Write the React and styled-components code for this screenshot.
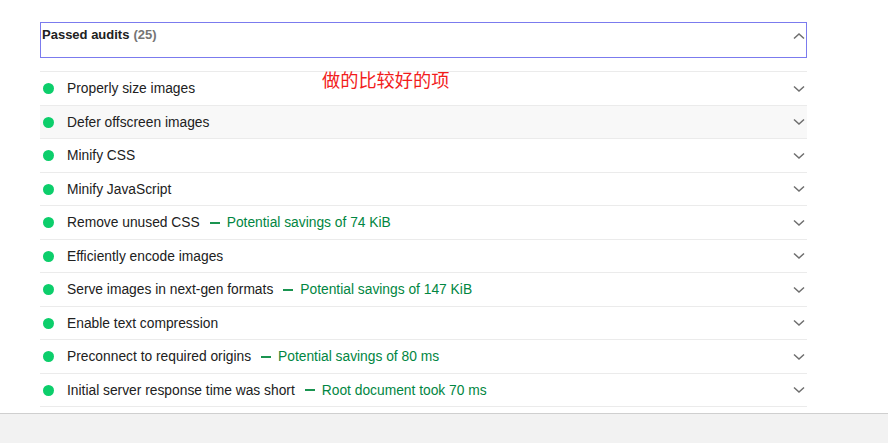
import React from "react";
import styled, { createGlobalStyle } from "styled-components";

const GlobalStyle = createGlobalStyle`
  html, body {
    margin: 0;
    padding: 0;
    background: #fff;
  }
  body {
    font-family: "Liberation Sans", Arial, sans-serif;
    color: #212121;
  }
`;

const Page = styled.div`
  display: flex;
  flex-direction: column;
  height: 443px;
  position: relative;
`;

const Main = styled.div`
  flex: 1;
  padding: 22px 0 0 40px;
`;

const Section = styled.div`
  width: 767px;
`;

const Summary = styled.div`
  height: 36px;
  box-sizing: border-box;
  border: 1px solid #7b7bee;
  padding: 4px 0 0 1px;
  display: flex;
  justify-content: space-between;
  align-items: flex-start;
  font-size: 13px;
  font-weight: bold;
  margin-bottom: 13px;
`;

const Count = styled.span`
  color: #757575;
  margin-left: 4px;
`;

const List = styled.div`
  border-bottom: 1px solid #ebebeb;
`;

const Row = styled.div`
  display: flex;
  align-items: center;
  height: 33.5px;
  box-sizing: border-box;
  padding: 1px 0 0 3px;
  border-top: 1px solid #ebebeb;
  background: ${(p) => (p.$hover ? "#f8f8f8" : "transparent")};
  font-size: 13.8px;
`;

const Dot = styled.span`
  width: 11px;
  height: 11px;
  border-radius: 50%;
  background: #0cce6b;
  flex: none;
  margin-right: 13px;
`;

const Title = styled.span`
  color: #212121;
`;

const Savings = styled.span`
  color: #018642;
  display: flex;
  align-items: center;
`;

const Dash = styled.span`
  display: inline-block;
  width: 10px;
  height: 2px;
  background: #1a9450;
  margin: 0 7px 0 10px;
`;

const Chevron = styled.svg`
  margin-left: auto;
  margin-right: 2px;
  flex: none;
`;

const SummaryChevron = styled.svg`
  margin-top: 5px;
  margin-right: 1px;
`;

const Note = styled.div`
  position: absolute;
  left: 322px;
  top: 66px;
  font-family: "Noto Sans CJK SC", sans-serif;
  font-size: 18.2px;
  color: #f21c1c;
`;

const Footer = styled.div`
  height: 29px;
  background: #f2f2f2;
  border-top: 1px solid #cfcfcf;
`;

const audits = [
  { title: "Properly size images" },
  { title: "Defer offscreen images", hover: true },
  { title: "Minify CSS" },
  { title: "Minify JavaScript" },
  { title: "Remove unused CSS", note: "Potential savings of 74 KiB" },
  { title: "Efficiently encode images" },
  { title: "Serve images in next-gen formats", note: "Potential savings of 147 KiB" },
  { title: "Enable text compression" },
  { title: "Preconnect to required origins", note: "Potential savings of 80 ms" },
  { title: "Initial server response time was short", note: "Root document took 70 ms" },
];

const ChevronDown = () => (
  <Chevron width="12" height="8" viewBox="0 0 12 8">
    <path d="M1 1.5 L6 6 L11 1.5" fill="none" stroke="#6e6e6e" strokeWidth="1.5" />
  </Chevron>
);

export default function App() {
  return (
    <Page>
      <GlobalStyle />
      <Main>
        <Section>
          <Summary>
            <span>
              Passed audits<Count>(25)</Count>
            </span>
            <SummaryChevron width="12" height="8" viewBox="0 0 12 8">
              <path d="M1 6.5 L6 2 L11 6.5" fill="none" stroke="#6e6e6e" strokeWidth="1.5" />
            </SummaryChevron>
          </Summary>
          <List>
            {audits.map((a) => (
              <Row key={a.title} $hover={a.hover}>
                <Dot />
                <Title>{a.title}</Title>
                {a.note && (
                  <Savings>
                    <Dash />
                    {a.note}
                  </Savings>
                )}
                <ChevronDown />
              </Row>
            ))}
          </List>
        </Section>
      </Main>
      <Footer />
      <Note>做的比较好的项</Note>
    </Page>
  );
}
